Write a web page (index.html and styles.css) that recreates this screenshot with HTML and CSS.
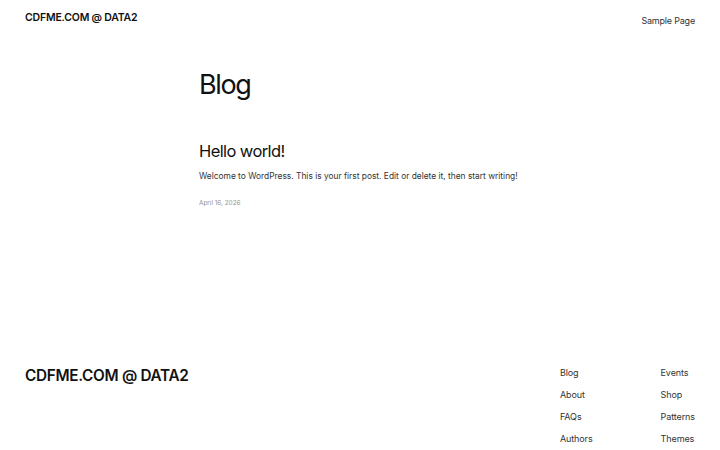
FILE: index.html
```html
<!DOCTYPE html>
<html lang="en">

<head>
    <meta charset="UTF-8">
    <meta name="viewport" content="width=device-width, initial-scale=1.0">
    <title>Blog – CDFME.COM @ DATA2</title>
    <link rel="stylesheet" href="styles.css">
</head>

<body>
    <header class="site-header">
        <a class="site-title" href="#">CDFME.COM @ DATA2</a>
        <nav class="header-nav">
            <a href="#">Sample Page</a>
        </nav>
    </header>

    <main class="site-main">
        <h1 class="page-title">Blog</h1>
        <article class="post">
            <h2 class="post-title"><a href="#">Hello world!</a></h2>
            <p class="post-excerpt">Welcome to WordPress. This is your first post. Edit or delete it, then start writing!</p>
            <time class="post-date" datetime="2026-04-16">April 16, 2026</time>
        </article>
    </main>

    <footer class="site-footer">
        <a class="footer-title" href="#">CDFME.COM @ DATA2</a>
        <nav class="footer-nav">
            <ul class="footer-col">
                <li><a href="#">Blog</a></li>
                <li><a href="#">About</a></li>
                <li><a href="#">FAQs</a></li>
                <li><a href="#">Authors</a></li>
            </ul>
            <ul class="footer-col">
                <li><a href="#">Events</a></li>
                <li><a href="#">Shop</a></li>
                <li><a href="#">Patterns</a></li>
                <li><a href="#">Themes</a></li>
            </ul>
        </nav>
    </footer>
</body>

</html>
```

FILE: styles.css
```css
body {
    margin: 0;
    font-family: Inter, "Noto Sans", sans-serif;
    color: #111111;
    background-color: #ffffff;
}

a {
    color: inherit;
    text-decoration: none;
}

.site-header {
    display: flex;
    justify-content: space-between;
    align-items: center;
    height: 35px;
    padding: 0 25px;
}

.site-title {
    font-size: 10.5px;
    font-weight: 600;
    letter-spacing: -0.2px;
}

.header-nav a {
    font-size: 9px;
    letter-spacing: -0.2px;
    color: #333333;
}

.site-main {
    width: 322px;
    margin: 0 auto;
    height: 300px;
}

.page-title {
    margin: 31px 0 0;
    font-size: 27px;
    font-weight: 400;
    line-height: 38px;
    letter-spacing: -1.4px;
}

.post {
    margin-top: 36px;
}

.post-title {
    margin: 0;
    font-size: 16.5px;
    font-weight: 400;
    line-height: 22px;
    letter-spacing: -0.6px;
}

.post-excerpt {
    margin: 7px 0 0;
    font-size: 8.4px;
    line-height: 14px;
    color: #333333;
    white-space: nowrap;
}

.post-date {
    display: block;
    margin-top: 16px;
    font-size: 6.4px;
    color: #949494;
}

.site-footer {
    display: flex;
    justify-content: space-between;
    align-items: flex-start;
    padding: 0 25px;
}

.footer-title {
    margin-top: 0;
    font-size: 15.3px;
    font-weight: 600;
    letter-spacing: -0.3px;
}

.footer-nav {
    display: flex;
    gap: 68px;
}

.footer-col {
    list-style: none;
    margin: 0;
    padding: 0;
    display: flex;
    flex-direction: column;
    gap: 8px;
}

.footer-col li {
    font-size: 9px;
    line-height: 14px;
    letter-spacing: -0.1px;
    color: #333333;
}
```
